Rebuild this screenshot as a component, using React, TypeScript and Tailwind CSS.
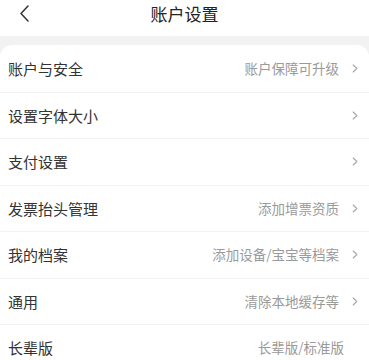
import React from "react";

const rows: { label: string; hint?: string; arrow?: boolean }[] = [
  { label: "账户与安全", hint: "账户保障可升级", arrow: true },
  { label: "设置字体大小", arrow: true },
  { label: "支付设置", arrow: true },
  { label: "发票抬头管理", hint: "添加增票资质", arrow: true },
  { label: "我的档案", hint: "添加设备/宝宝等档案", arrow: true },
  { label: "通用", hint: "清除本地缓存等", arrow: true },
  { label: "长辈版", hint: "长辈版/标准版" },
];

function Chevron() {
  return (
    <svg width="6" height="9" viewBox="0 0 6 9" className="ml-[13px] shrink-0">
      <path d="M1.2 1l3.6 3.5-3.6 3.5" fill="none" stroke="#a6a6a6" strokeWidth="1.1" strokeLinecap="round" strokeLinejoin="round" />
    </svg>
  );
}

export default function App() {
  return (
    <div
      className="w-[369px] h-[360px] overflow-hidden bg-[#f2f2f2]"
      style={{ fontFamily: '"Noto Sans CJK SC", "Noto Sans", sans-serif' }}
    >
      {/* header */}
      <div className="relative h-[36px] bg-white flex items-center justify-center">
        <button className="absolute left-[18px] top-[4px] p-0">
          <svg width="14" height="18" viewBox="0 0 14 18">
            <path d="M10 2L3 9.5l7 7.5" fill="none" stroke="#333" strokeWidth="1.5" strokeLinecap="round" strokeLinejoin="round" />
          </svg>
        </button>
        <div className="text-[17px] leading-none text-[#222] -mt-[10px]">账户设置</div>
      </div>

      <div className="mt-[9px] bg-white rounded-t-[12px]">
        {rows.map((r, i) => (
          <div
            key={r.label}
            className={`h-[46.5px] flex items-center pl-[8px] pr-[11px] ${i > 0 ? "border-t border-[#f2f2f2]" : ""}`}
          >
            <span className="flex-1 text-[15px] leading-none text-[#333]">{r.label}</span>
            {r.hint && <span className="text-[13.5px] leading-none text-[#9a9a9a]">{r.hint}</span>}
            {r.arrow ? <Chevron /> : <span className="w-[14px]" />}
          </div>
        ))}
      </div>
    </div>
  );
}
